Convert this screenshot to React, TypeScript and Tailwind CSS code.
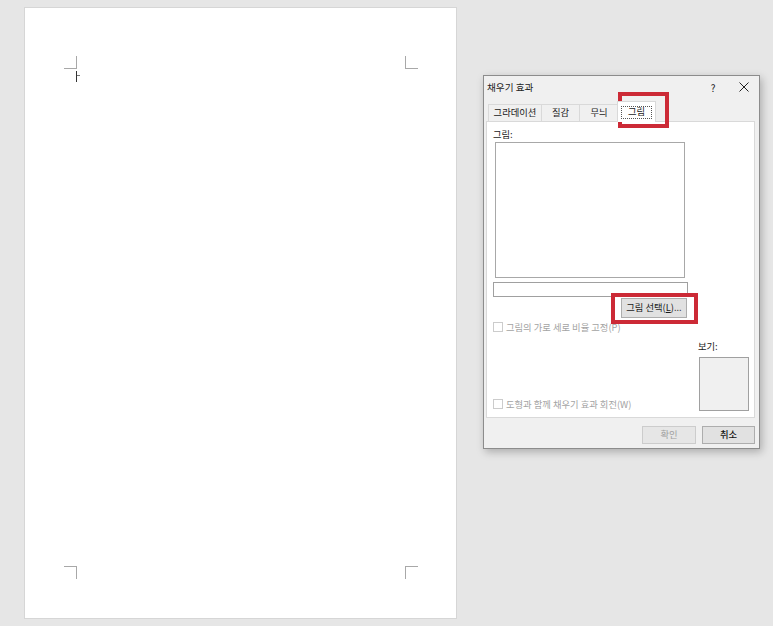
import React from "react";

const Checkbox = ({ label }: { label: string }) => (
  <div className="flex items-center h-[12px] leading-[12px]">
    <span className="w-[10px] h-[10px] border border-[#cccccc] bg-white mr-[3px]" />
    <span className="text-[#a3a3a3]">{label}</span>
  </div>
);

export default function App() {
  return (
    <div className="relative w-[773px] h-[626px] bg-[#e6e6e6] pt-[7px] pl-[24px] font-['Noto_Sans_CJK_KR','Noto_Sans',sans-serif] text-[9.3px] text-[#1a1a1a] overflow-hidden">
      {/* document page */}
      <div className="relative w-[433px] h-[612px] bg-white border border-[#d6d6d6]">
        <div className="absolute left-[39px] top-[48px] w-[13px] h-[13px] border-r border-b border-[#a8a8a8]" />
        <div className="absolute left-[380px] top-[48px] w-[13px] h-[13px] border-l border-b border-[#a8a8a8]" />
        <div className="absolute left-[39px] top-[558px] w-[13px] h-[13px] border-r border-t border-[#a8a8a8]" />
        <div className="absolute left-[380px] top-[558px] w-[13px] h-[13px] border-l border-t border-[#a8a8a8]" />
        <div className="absolute left-[51px] top-[63px] w-[1px] h-[11px] bg-[#333333]" />
        <div className="absolute left-[52px] top-[67px] w-[3px] h-[1px] bg-[#777777]" />
      </div>

      {/* dialog window */}
      <div className="absolute left-[483px] top-[75px] w-[277px] h-[374px] bg-[#f0f0f0] border border-[#8c8c8c] shadow-[2px_3px_8px_rgba(0,0,0,0.25)] flex flex-col">
        {/* title bar */}
        <div className="h-[22px] flex items-center pl-[3px] shrink-0">
          <span className="flex-1 text-[9.6px] text-[#222]">채우기 효과</span>
          <span className="w-[30px] text-center text-[10px]">?</span>
          <span className="w-[31px] flex justify-center">
            <svg width="10" height="10" viewBox="0 0 10 10">
              <path d="M0.5 0.5 L9.5 9.5 M9.5 0.5 L0.5 9.5" stroke="#222" strokeWidth="1" />
            </svg>
          </span>
        </div>

        {/* tabs */}
        <div className="h-[23px] flex items-end pl-[4px] shrink-0 relative z-10">
          <div className="w-[54px] h-[17px] border border-b-0 border-[#d9d9d9] bg-[#f0f0f0] flex items-center justify-center">그라데이션</div>
          <div className="w-[38px] h-[17px] border border-l-0 border-b-0 border-[#d9d9d9] bg-[#f0f0f0] flex items-center justify-center">질감</div>
          <div className="w-[39px] h-[17px] border border-l-0 border-b-0 border-[#d9d9d9] bg-[#f0f0f0] flex items-center justify-center">무늬</div>
          <div className="w-[39px] h-[21px] -ml-[2px] mb-[-1px] border border-b-0 border-[#d9d9d9] bg-white flex items-center justify-center">
            <span className="w-[31px] h-[13px] border border-dotted border-[#555] flex items-center justify-center">그림</span>
          </div>
        </div>

        {/* panel */}
        <div className="ml-[2px] w-[269px] h-[297px] border border-[#d9d9d9] bg-white flex flex-col pl-[6px] pt-[6px] pb-[6px] shrink-0">
          <div className="h-[12px] leading-[12px]">그림:</div>
          <div className="ml-[2px] mt-[2px] w-[190px] h-[136px] border border-[#a8a8a8] bg-white" />
          <div className="mt-[4px] w-[195px] h-[15px] border border-[#a0a0a0] bg-white" />
          <div className="mt-[1px] ml-[128px] w-[66px] h-[20px] border border-[#adadad] bg-[#e1e1e1] flex items-center justify-center whitespace-nowrap">
            그림 선택(<span className="underline">L</span>)...
          </div>
          <div className="mt-[3px]">
            <Checkbox label="그림의 가로 세로 비율 고정(P)" />
          </div>
          <div className="flex flex-1">
            <div className="flex-1 flex flex-col justify-end pb-[1px]">
              <Checkbox label="도형과 함께 채우기 효과 회전(W)" />
            </div>
            <div className="mr-[5px] flex flex-col">
              <div className="mt-[7px] h-[12px] leading-[12px]">보기:</div>
              <div className="mt-[5px] ml-[1px] w-[50px] h-[54px] border border-[#a0a0a0] bg-[#f0f0f0]" />
            </div>
          </div>
        </div>

        {/* buttons */}
        <div className="mt-[8px] flex justify-end gap-[6px] pr-[4px]">
          <div className="w-[54px] h-[18px] border border-[#cccccc] bg-[#e6e6e6] text-[#a0a0a0] flex items-center justify-center">확인</div>
          <div className="w-[53px] h-[18px] border border-[#adadad] bg-[#e1e1e1] text-[#111] font-medium flex items-center justify-center">취소</div>
        </div>
      </div>

      {/* red highlight annotations */}
      <div className="absolute left-[618px] top-[92px] w-[51px] h-[36px] border-[4px] border-[#cc2a36]" />
      <div className="absolute left-[611px] top-[293px] w-[87px] h-[31px] border-[4px] border-[#cc2a36]" />
    </div>
  );
}
